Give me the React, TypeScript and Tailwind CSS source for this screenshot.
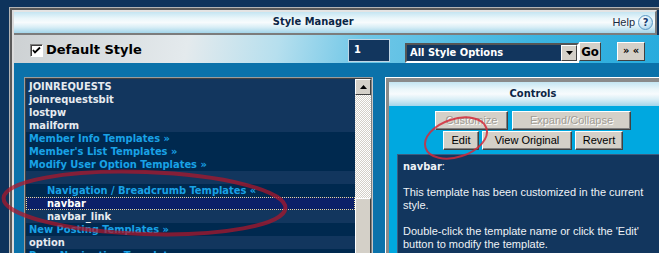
import React from "react";

const BOLD = "font-['DejaVu_Sans_Condensed','DejaVu_Sans',sans-serif] font-bold";
const SANS = "font-['Liberation_Sans',Arial,sans-serif]";

type Row = { t: string; k: "item" | "group" | "sel"; indent?: boolean };

const rows: Row[] = [
  { t: "JOINREQUESTS", k: "item" },
  { t: "joinrequestsbit", k: "item" },
  { t: "lostpw", k: "item" },
  { t: "mailform", k: "item" },
  { t: "Member Info Templates »", k: "group" },
  { t: "Member's List Templates »", k: "group" },
  { t: "Modify User Option Templates »", k: "group" },
  { t: "", k: "item" },
  { t: "Navigation / Breadcrumb Templates «", k: "group", indent: true },
  { t: "navbar", k: "sel", indent: true },
  { t: "navbar_link", k: "item", indent: true },
  { t: "New Posting Templates »", k: "group" },
  { t: "option", k: "item" },
  { t: "Page Navigation Templates »", k: "group" },
];

function ListRow({ r }: { r: Row }) {
  const base = `h-[13px] leading-[13px] text-[11px] whitespace-nowrap ${BOLD} ${r.indent ? "pl-[21px]" : "pl-[3px]"}`;
  if (r.k === "group") return <div className={`${base} bg-[#00294f] text-[#19a2e6]`}>{r.t}</div>;
  if (r.k === "sel")
    return (
      <div className={`${base} bg-[#0c2068] text-white outline outline-1 outline-dotted outline-[#e6dc9c] -outline-offset-1`}>
        {r.t}
      </div>
    );
  return <div className={`${base} bg-[#12365e] text-[#e6ebf0]`}>{r.t}</div>;
}

function Btn({ children, className, disabled }: { children: React.ReactNode; className: string; disabled?: boolean }) {
  return (
    <div
      className={`h-[19px] bg-[#d4d0c8] border border-t-white border-l-white border-r-[#404040] border-b-[#404040] shadow-[inset_-1px_-1px_0_#808080] text-[11px] ${SANS} flex items-center justify-center ${
        disabled ? "text-[#a09c94] [text-shadow:1px_1px_0_#ffffff]" : "text-black"
      } ${className}`}
    >
      {children}
    </div>
  );
}

const HEAD_GRAD =
  "bg-[linear-gradient(180deg,#c4e5f2_0%,#eaf6fa_30%,#f7fbfd_50%,#d9eef6_72%,#a3d5ea_100%)]";

export default function App() {
  return (
    <div className="relative w-[659px] h-[253px] overflow-hidden bg-[#0e335c]">
      <div className="pt-[7px] pl-[9px]">
        <div className="w-[700px] border-t border-l border-[#b4b4b4]">
          <div className="border-t-2 border-l-2 border-[#5a5a5a]">
            <div className="border-l-2 border-[#dcdcdc]">
              {/* header */}
              <div className="flex">
                <div className={`w-[643px] h-[25px] border-t-2 border-[#e4e4e4] border-b-2 border-b-[#7c7c7c] border-r-2 border-r-[#7c7c7c] ${HEAD_GRAD} flex`}>
                  <div className={`w-[600px] flex items-center justify-center text-[11px] text-[#0b2545] ${BOLD}`}>Style Manager</div>
                  <div className="flex-1 flex items-center justify-end pr-[2px] gap-[3px]">
                    <span className={`text-[11px] text-[#1a2a40] ${SANS}`}>Help</span>
                    <div className="w-[15px] h-[15px] rounded-full border border-[#5b98c4] bg-[radial-gradient(circle_at_35%_30%,#ffffff_0%,#cfe8f6_55%,#8cc2e2_100%)] flex items-center justify-center">
                      <span className={`text-[11px] leading-[11px] text-[#173a6e] ${BOLD}`}>?</span>
                    </div>
                  </div>
                </div>
              </div>
              {/* toolbar */}
              <div className="h-[28px] flex items-start bg-[linear-gradient(100deg,#cdd1d3_0%,#e4eaed_25%,#b6dfee_38%,#70c7e7_50%,#3cb4e0_75%,#20a8dc_100%)]">
                <div className="w-[334px] pl-[16px] pt-[8px] flex items-center">
                  <div className="w-[13px] h-[13px] bg-white border border-t-[#808080] border-l-[#808080] border-r-white border-b-white shadow-[inset_1px_1px_0_#404040] flex items-center justify-center">
                    <svg width="9" height="9" viewBox="0 0 9 9">
                      <path d="M1 4 L3 6.5 L8 1.5" stroke="#000" strokeWidth="1.8" fill="none" />
                    </svg>
                  </div>
                  <span className="ml-[3px] text-[13px] leading-[14px] text-black font-['DejaVu_Sans',sans-serif] font-bold">Default Style</span>
                </div>
                <div className={`mt-[4px] w-[42px] h-[23px] bg-[#12365e] border border-[#c0d6e4] text-white text-[11px] pl-[5px] flex items-center ${BOLD}`}>1</div>
                <div className="ml-[15px] mt-[8px] w-[174px] h-[20px] bg-[#12365e] border-2 border-t-[#555] border-l-[#555] border-r-white border-b-white flex items-center justify-between">
                  <span className={`pl-[3px] text-[11px] text-white ${BOLD}`}>All Style Options</span>
                  <div className="w-[16px] h-[16px] bg-[#d4d0c8] border border-t-white border-l-white border-r-[#404040] border-b-[#404040] flex items-center justify-center">
                    <svg width="7" height="4" viewBox="0 0 7 4"><path d="M0 0 H7 L3.5 4 Z" fill="#000" /></svg>
                  </div>
                </div>
                <div className={`mt-[7px] w-[22px] h-[19px] bg-[#d4d0c8] border border-t-white border-l-white border-r-[#404040] border-b-[#404040] flex items-center justify-center text-[13px] text-black ${BOLD}`}>Go</div>
                <div className={`ml-[16px] mt-[7px] w-[28px] h-[19px] bg-[#d4d0c8] border border-t-white border-l-white border-r-[#404040] border-b-[#404040] flex items-center justify-center text-[11px] text-black ${BOLD}`}>» «</div>
              </div>
              {/* content */}
              <div className="h-[200px] bg-[#0b72aa] pt-[14px] pl-[10px] flex items-start">
                {/* list */}
                <div className="w-[349px] h-[190px] border border-[#9c9c9c] border-r-[#c8c8c8] border-b-[#c8c8c8]">
                  <div className="h-full border border-t-[#404040] border-l-[#404040] border-r-[#808080] border-b-[#808080] flex">
                    <div className="flex-1 flex flex-col bg-[#12365e] pt-[1px]">
                      {rows.map((r, i) => (
                        <ListRow key={i} r={r} />
                      ))}
                    </div>
                    <div className="w-[16px] flex flex-col">
                      <div className="h-[16px] bg-[#d4d0c8] border border-t-white border-l-white border-r-[#404040] border-b-[#404040] flex items-center justify-center">
                        <svg width="7" height="4" viewBox="0 0 7 4"><path d="M0 4 H7 L3.5 0 Z" fill="#000" /></svg>
                      </div>
                      <div className="h-[103px] bg-[repeating-conic-gradient(#d4d0c8_0_25%,#ffffff_0_50%)] bg-[length:2px_2px]" />
                      <div className="flex-1 bg-[#d4d0c8] border border-t-white border-l-white border-r-[#404040] border-b-[#404040]" />
                    </div>
                  </div>
                </div>
                {/* right panel */}
                <div className="ml-[12px] w-[300px] h-[190px] border-t border-l border-white">
                  <div className="h-full border-t-4 border-l-[3px] border-[#8a8a8a] flex flex-col bg-[#00a8e0]">
                    <div className={`h-[24px] ${HEAD_GRAD} flex items-center justify-center text-[11px] text-[#0b2545] ${BOLD} w-[288px]`}>Controls</div>
                    <div className="w-[288px] pt-[5px] flex flex-col items-center gap-[1px]">
                      <div className="flex gap-[4px]">
                        <Btn className="w-[73px]" disabled>Customize</Btn>
                        <Btn className="w-[119px]" disabled>Expand/Collapse</Btn>
                      </div>
                      <div className="flex gap-[3px]">
                        <Btn className="w-[36px]">Edit</Btn>
                        <Btn className="w-[90px]">View Original</Btn>
                        <Btn className="w-[48px]">Revert</Btn>
                      </div>
                    </div>
                    <div className="ml-[8px] mt-[4px] w-[272px] flex-1 bg-[#12365e] border-t border-l border-[#3c5c80] pl-[5px] pt-[5px]">
                      <div className={`text-[11px] leading-[13px] text-[#eef2f6] ${SANS} whitespace-nowrap`}>
                        <div className="h-[13px]"><span className={BOLD}>navbar</span>:</div>
                        <div className="h-[13px]" />
                        <div className="h-[13px]">This template has been customized in the current</div>
                        <div className="h-[13px]">style.</div>
                        <div className="h-[13px]" />
                        <div className="h-[13px]">Double-click the template name or click the 'Edit'</div>
                        <div className="h-[13px]">button to modify the template.</div>
                      </div>
                    </div>
                  </div>
                </div>
              </div>
            </div>
          </div>
        </div>
      </div>
      {/* annotations */}
      <svg className="absolute left-0 top-0 pointer-events-none" width="659" height="253" viewBox="0 0 659 253">
        <ellipse cx="144.5" cy="203" rx="141" ry="31" transform="rotate(2 144.5 203)" fill="none" stroke="#b0162a" strokeOpacity="0.72" strokeWidth="4" />
        <ellipse cx="456" cy="138" rx="32" ry="19" transform="rotate(-18 456 138)" fill="none" stroke="#d42a3a" strokeOpacity="0.85" strokeWidth="2" />
      </svg>
    </div>
  );
}
